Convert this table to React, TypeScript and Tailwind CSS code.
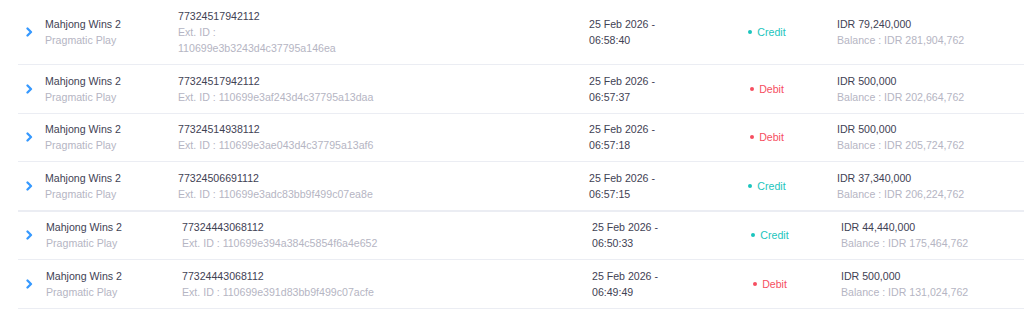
type Tx = {
  id: string;
  ext: string;
  wrapExt?: boolean;
  date: string;
  time: string;
  type: "Credit" | "Debit";
  amount: string;
  balance: string;
};

const groupOne: Tx[] = [
  { id: "77324517942112", ext: "110699e3b3243d4c37795a146ea", wrapExt: true, date: "25 Feb 2026 -", time: "06:58:40", type: "Credit", amount: "IDR 79,240,000", balance: "Balance : IDR 281,904,762" },
  { id: "77324517942112", ext: "110699e3af243d4c37795a13daa", date: "25 Feb 2026 -", time: "06:57:37", type: "Debit", amount: "IDR 500,000", balance: "Balance : IDR 202,664,762" },
  { id: "77324514938112", ext: "110699e3ae043d4c37795a13af6", date: "25 Feb 2026 -", time: "06:57:18", type: "Debit", amount: "IDR 500,000", balance: "Balance : IDR 205,724,762" },
  { id: "77324506691112", ext: "110699e3adc83bb9f499c07ea8e", date: "25 Feb 2026 -", time: "06:57:15", type: "Credit", amount: "IDR 37,340,000", balance: "Balance : IDR 206,224,762" },
];

const groupTwo: Tx[] = [
  { id: "77324443068112", ext: "110699e394a384c5854f6a4e652", date: "25 Feb 2026 -", time: "06:50:33", type: "Credit", amount: "IDR 44,440,000", balance: "Balance : IDR 175,464,762" },
  { id: "77324443068112", ext: "110699e391d83bb9f499c07acfe", date: "25 Feb 2026 -", time: "06:49:49", type: "Debit", amount: "IDR 500,000", balance: "Balance : IDR 131,024,762" },
];

function Chevron() {
  return (
    <svg width="7" height="10" viewBox="0 0 7 10" fill="none">
      <path d="M1.5 1.5l3.5 3.5-3.5 3.5" stroke="#3699ff" strokeWidth="2.3" strokeLinecap="round" strokeLinejoin="round" />
    </svg>
  );
}

function Row({ tx, wide }: { tx: Tx; wide?: boolean }) {
  const credit = tx.type === "Credit";
  return (
    <div className={`flex items-center border-b border-[#ebedf3] ${tx.wrapExt ? "py-2" : "py-[7.75px]"}`}>
      <div className={`flex pl-[8px] ${wide ? "w-[28px]" : "w-[27px]"}`}>
        <Chevron />
      </div>
      <div className={wide ? "w-[136px]" : "w-[133px]"}>
        <div className="text-[#3f4254]">Mahjong Wins 2</div>
        <div className="text-[#b5b5c3]">Pragmatic Play</div>
      </div>
      <div className={wide ? "w-[410px]" : "w-[411px]"}>
        <div className="text-[#3f4254]">{tx.id}</div>
        {tx.wrapExt ? (
          <>
            <div className="text-[#b5b5c3]">Ext. ID :</div>
            <div className="text-[#b5b5c3]">{tx.ext}</div>
          </>
        ) : (
          <div className="text-[#b5b5c3]">Ext. ID : {tx.ext}</div>
        )}
      </div>
      <div className="w-[128px] text-[#3f4254]">
        <div>{tx.date}</div>
        <div>{tx.time}</div>
      </div>
      <div className="w-[100px] flex justify-center">
        <span className={`flex items-center gap-[5px] ${credit ? "text-[#1bc5bd]" : "text-[#f64e60]"}`}>
          <span className={`w-1 h-1 rounded-full ${credit ? "bg-[#1bc5bd]" : "bg-[#f64e60]"}`} />
          {tx.type}
        </span>
      </div>
      <div className={wide ? "pl-[21px]" : "pl-[20px]"}>
        <div className="text-[#3f4254]">{tx.amount}</div>
        <div className="text-[#b5b5c3]">{tx.balance}</div>
      </div>
    </div>
  );
}

export default function App() {
  return (
    <div className="w-[1024px] h-[309px] overflow-hidden bg-white pl-[18px] text-[10.6px] leading-4 font-['Liberation_Sans',Arial,sans-serif]">
      <div>
        {groupOne.map((tx, i) => (
          <Row key={i} tx={tx} />
        ))}
      </div>
      <div className="border-t border-[#ebedf3]">
        {groupTwo.map((tx, i) => (
          <Row key={i} tx={tx} wide />
        ))}
      </div>
    </div>
  );
}
